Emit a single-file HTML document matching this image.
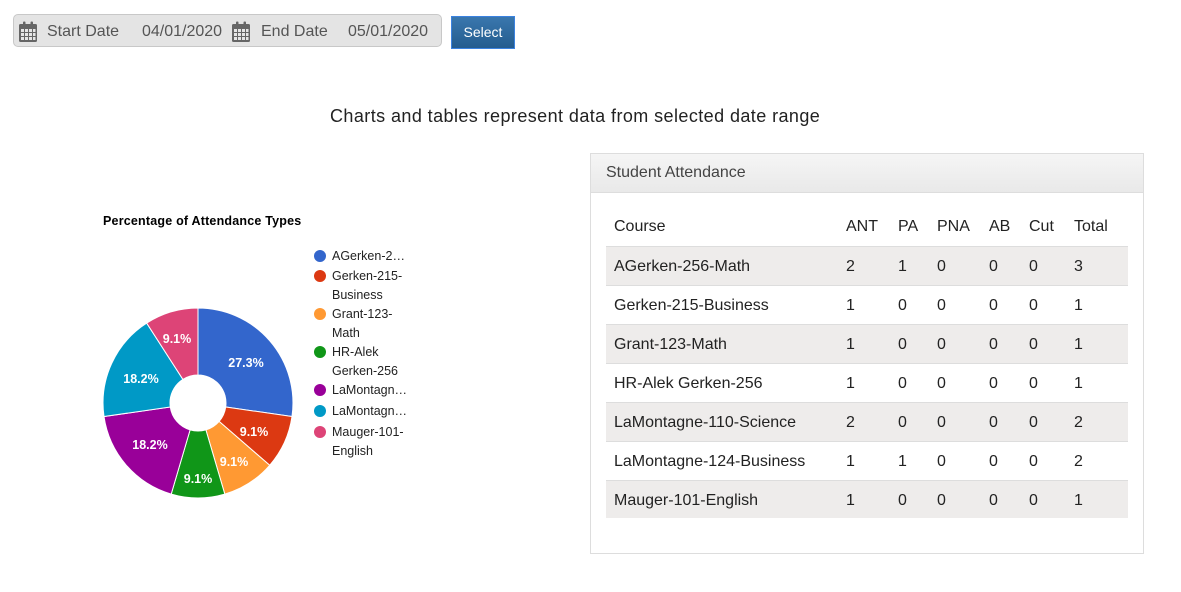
<!DOCTYPE html>
<html><head><meta charset="utf-8"><style>
body{margin:0;width:1181px;height:592px;background:#fff;font-family:"Liberation Sans",sans-serif;position:relative;overflow:hidden;color:#222}
.a{position:absolute;white-space:nowrap}
.bar{position:absolute;left:13px;top:14px;width:429px;height:33px;background:#e4e4e4;border:1px solid #c8c8c8;border-radius:5px;box-sizing:border-box}
.bt{color:#555;font-size:16px;top:22px}
.btn{position:absolute;left:451px;top:16px;width:64px;height:33px;background:linear-gradient(#3a77ae,#245c8f);border:1px solid #3b82e0;box-sizing:border-box;color:#fff;font-size:14px;text-align:center;line-height:31px}
.panel{position:absolute;left:590px;top:153px;width:554px;height:401px;border:1px solid #ddd;box-sizing:border-box}
.ph{height:38px;background:linear-gradient(#f5f5f5,#e9e9e9);border-bottom:1px solid #ddd;font-size:16px;color:#444;line-height:37px;padding-left:15px}
.row{position:absolute;left:606px;width:522px;height:39px;border-top:1px solid #ddd;box-sizing:border-box}
.c{position:absolute;font-size:16px;color:#222;line-height:39px}
.lg{font-size:12.5px;color:#222;line-height:19px}
</style></head><body>
<div class="bar"></div>
<svg class="a" style="left:18px;top:21px" width="20" height="22" viewBox="0 0 20 22"><rect x="1" y="3" width="18" height="18" rx="1.5" fill="#666"/><rect x="5" y="0.5" width="2.5" height="5" rx="1" fill="#666"/><rect x="12.5" y="0.5" width="2.5" height="5" rx="1" fill="#666"/><g fill="#e6e6e6"><rect x="3" y="8" width="3" height="3"/><rect x="7" y="8" width="3" height="3"/><rect x="11" y="8" width="3" height="3"/><rect x="15" y="8" width="2.5" height="3"/><rect x="3" y="12" width="3" height="3"/><rect x="7" y="12" width="3" height="3"/><rect x="11" y="12" width="3" height="3"/><rect x="15" y="12" width="2.5" height="3"/><rect x="3" y="16" width="3" height="3"/><rect x="7" y="16" width="3" height="3"/><rect x="11" y="16" width="3" height="3"/><rect x="15" y="16" width="2.5" height="3"/></g></svg>
<svg class="a" style="left:231px;top:21px" width="20" height="22" viewBox="0 0 20 22"><rect x="1" y="3" width="18" height="18" rx="1.5" fill="#666"/><rect x="5" y="0.5" width="2.5" height="5" rx="1" fill="#666"/><rect x="12.5" y="0.5" width="2.5" height="5" rx="1" fill="#666"/><g fill="#e6e6e6"><rect x="3" y="8" width="3" height="3"/><rect x="7" y="8" width="3" height="3"/><rect x="11" y="8" width="3" height="3"/><rect x="15" y="8" width="2.5" height="3"/><rect x="3" y="12" width="3" height="3"/><rect x="7" y="12" width="3" height="3"/><rect x="11" y="12" width="3" height="3"/><rect x="15" y="12" width="2.5" height="3"/><rect x="3" y="16" width="3" height="3"/><rect x="7" y="16" width="3" height="3"/><rect x="11" y="16" width="3" height="3"/><rect x="15" y="16" width="2.5" height="3"/></g></svg>
<div class="a bt" style="left:47px;top:23px">Start Date</div>
<div class="a bt" style="left:142px;top:23px">04/01/2020</div>
<div class="a bt" style="left:261px;top:23px">End Date</div>
<div class="a bt" style="left:348px;top:23px">05/01/2020</div>
<div class="btn">Select</div>
<div class="a" style="left:330px;top:106px;font-size:18px;color:#222;letter-spacing:0.42px">Charts and tables represent data from selected date range</div>

<div class="a" style="left:103px;top:214px;font-size:12.5px;font-weight:bold;color:#000;letter-spacing:0.2px">Percentage of Attendance Types</div>
<svg class="a" style="left:0;top:0" width="590" height="592">
<g stroke="#fff" stroke-width="1">
<path d="M198,308 A95,95 0 0 1 292,416.5 L225.7,407 A28,28 0 0 0 198,375Z" fill="#3366cc"/>
<path d="M292,416.5 A95,95 0 0 1 269.7,465.3 L219.1,421.4 A28,28 0 0 0 225.7,407Z" fill="#dc3912"/>
<path d="M269.7,465.3 A95,95 0 0 1 224.8,494.1 L205.9,429.9 A28,28 0 0 0 219.1,421.4Z" fill="#ff9933"/>
<path d="M224.8,494.1 A95,95 0 0 1 171.2,494.1 L190.1,429.9 A28,28 0 0 0 205.9,429.9Z" fill="#109618"/>
<path d="M171.2,494.1 A95,95 0 0 1 104,416.5 L170.3,407 A28,28 0 0 0 190.1,429.9Z" fill="#990099"/>
<path d="M104,416.5 A95,95 0 0 1 146.7,323.1 L182.9,379.4 A28,28 0 0 0 170.3,407Z" fill="#0099c6"/>
<path d="M146.7,323.1 A95,95 0 0 1 198,308 L198,375 A28,28 0 0 0 182.9,379.4Z" fill="#dd4477"/>
</g>
<g fill="#fff" font-family="Liberation Sans,sans-serif" font-size="12.5" font-weight="bold" text-anchor="middle">
<text x="246" y="367">27.3%</text><text x="254" y="436">9.1%</text><text x="234" y="466">9.1%</text><text x="198" y="483">9.1%</text><text x="150" y="449">18.2%</text><text x="141" y="383">18.2%</text><text x="177" y="343">9.1%</text>
</g>
<g><circle cx="320" cy="256" r="6" fill="#3366cc"/><circle cx="320" cy="276" r="6" fill="#dc3912"/><circle cx="320" cy="314" r="6" fill="#ff9933"/><circle cx="320" cy="352" r="6" fill="#109618"/><circle cx="320" cy="390" r="6" fill="#990099"/><circle cx="320" cy="411" r="6" fill="#0099c6"/><circle cx="320" cy="432" r="6" fill="#dd4477"/></g>
</svg>
<div class="a lg" style="left:332px;top:247px">AGerken-2…</div>
<div class="a lg" style="left:332px;top:267px">Gerken-215-<br>Business</div>
<div class="a lg" style="left:332px;top:305px">Grant-123-<br>Math</div>
<div class="a lg" style="left:332px;top:343px">HR-Alek<br>Gerken-256</div>
<div class="a lg" style="left:332px;top:381px">LaMontagn…</div>
<div class="a lg" style="left:332px;top:402px">LaMontagn…</div>
<div class="a lg" style="left:332px;top:423px">Mauger-101-<br>English</div>

<div class="panel"><div class="ph">Student Attendance</div></div>
<div class="row" style="top:207px;border-top:none"><span class="c" style="left:8px">Course</span><span class="c" style="left:240px">ANT</span><span class="c" style="left:292px">PA</span><span class="c" style="left:331px">PNA</span><span class="c" style="left:383px">AB</span><span class="c" style="left:423px">Cut</span><span class="c" style="left:468px">Total</span></div>
<div class="row" style="top:246px;background:#eeeceb"><span class="c" style="left:8px">AGerken-256-Math</span><span class="c" style="left:240px">2</span><span class="c" style="left:292px">1</span><span class="c" style="left:331px">0</span><span class="c" style="left:383px">0</span><span class="c" style="left:423px">0</span><span class="c" style="left:468px">3</span></div>
<div class="row" style="top:285px"><span class="c" style="left:8px">Gerken-215-Business</span><span class="c" style="left:240px">1</span><span class="c" style="left:292px">0</span><span class="c" style="left:331px">0</span><span class="c" style="left:383px">0</span><span class="c" style="left:423px">0</span><span class="c" style="left:468px">1</span></div>
<div class="row" style="top:324px;background:#eeeceb"><span class="c" style="left:8px">Grant-123-Math</span><span class="c" style="left:240px">1</span><span class="c" style="left:292px">0</span><span class="c" style="left:331px">0</span><span class="c" style="left:383px">0</span><span class="c" style="left:423px">0</span><span class="c" style="left:468px">1</span></div>
<div class="row" style="top:363px"><span class="c" style="left:8px">HR-Alek Gerken-256</span><span class="c" style="left:240px">1</span><span class="c" style="left:292px">0</span><span class="c" style="left:331px">0</span><span class="c" style="left:383px">0</span><span class="c" style="left:423px">0</span><span class="c" style="left:468px">1</span></div>
<div class="row" style="top:402px;background:#eeeceb"><span class="c" style="left:8px">LaMontagne-110-Science</span><span class="c" style="left:240px">2</span><span class="c" style="left:292px">0</span><span class="c" style="left:331px">0</span><span class="c" style="left:383px">0</span><span class="c" style="left:423px">0</span><span class="c" style="left:468px">2</span></div>
<div class="row" style="top:441px"><span class="c" style="left:8px">LaMontagne-124-Business</span><span class="c" style="left:240px">1</span><span class="c" style="left:292px">1</span><span class="c" style="left:331px">0</span><span class="c" style="left:383px">0</span><span class="c" style="left:423px">0</span><span class="c" style="left:468px">2</span></div>
<div class="row" style="top:480px;height:38px;background:#eeeceb"><span class="c" style="left:8px">Mauger-101-English</span><span class="c" style="left:240px">1</span><span class="c" style="left:292px">0</span><span class="c" style="left:331px">0</span><span class="c" style="left:383px">0</span><span class="c" style="left:423px">0</span><span class="c" style="left:468px">1</span></div>
</body></html>
